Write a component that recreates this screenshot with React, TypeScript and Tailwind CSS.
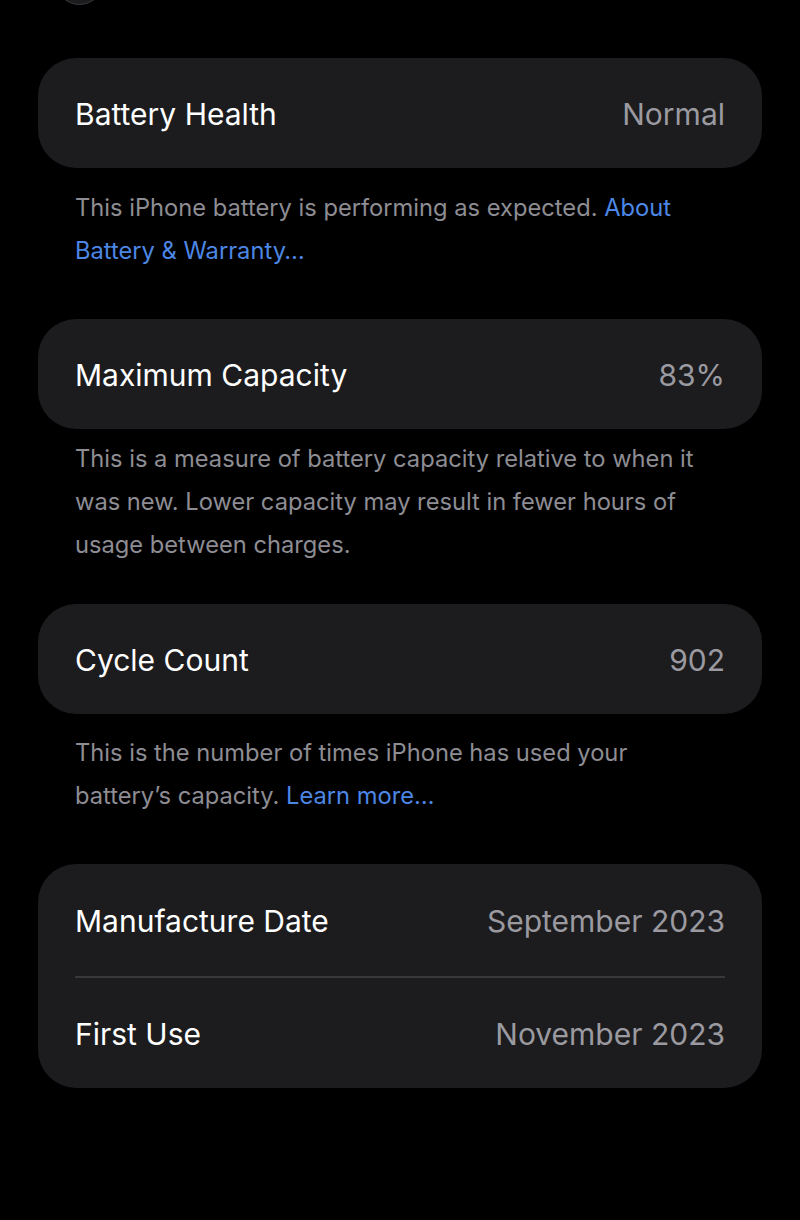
import React from 'react'

const font = { fontFamily: 'Inter, "Noto Sans", sans-serif' }

function Row({ label, value }: { label: string; value: string }) {
  return (
    <div className="flex h-[110px] items-center justify-between px-[37px] pt-[3px]">
      <span className="text-[30px] text-white">{label}</span>
      <span className="text-[30px] text-[#9a9aa0]">{value}</span>
    </div>
  )
}

function Card({ children }: { children: React.ReactNode }) {
  return <div className="mx-[38px] overflow-hidden rounded-[38px] bg-[#1c1c1e]">{children}</div>
}

function Note({ children, className }: { children: React.ReactNode; className: string }) {
  return (
    <p className={`pl-[75px] pr-[80px] text-[23.7px] leading-[43px] text-[#8d8d93] ${className}`}>
      {children}
    </p>
  )
}

export default function App() {
  return (
    <div className="min-h-[1220px] w-[800px] overflow-hidden bg-black" style={font}>
      <div className="flex h-[58px] flex-col">
        <div className="ml-[55px] -mt-[44px] h-[49px] w-[49px] rounded-full border border-[#3a3a3c] bg-[#1c1c1e]" />
      </div>

      <Card>
        <Row label="Battery Health" value="Normal" />
      </Card>
      <Note className="pt-[18px] pb-[47px]">
        This iPhone battery is performing as expected.{' '}
        <span className="text-[#4c87e6]">About Battery &amp; Warranty…</span>
      </Note>

      <Card>
        <Row label="Maximum Capacity" value="83%" />
      </Card>
      <Note className="pt-[8px] pb-[38px]">
        This is a measure of battery capacity relative to when it was new. Lower capacity may
        result in fewer hours of usage between charges.
      </Note>

      <Card>
        <Row label="Cycle Count" value="902" />
      </Card>
      <Note className="pt-[17px] pb-[47px]">
        This is the number of times iPhone has used your battery’s capacity.{' '}
        <span className="text-[#4c87e6]">Learn more…</span>
      </Note>

      <Card>
        <div className="flex h-[112px] items-center justify-between px-[37px] pt-[3px]">
          <span className="text-[30px] text-white">Manufacture Date</span>
          <span className="text-[30px] text-[#9a9aa0]">September 2023</span>
        </div>
        <div className="mx-[37px] h-[2px] bg-[#38383a]" />
        <div className="flex h-[110px] items-center justify-between px-[37px] pt-[3px]">
          <span className="text-[30px] text-white">First Use</span>
          <span className="text-[30px] text-[#9a9aa0]">November 2023</span>
        </div>
      </Card>
    </div>
  )
}
